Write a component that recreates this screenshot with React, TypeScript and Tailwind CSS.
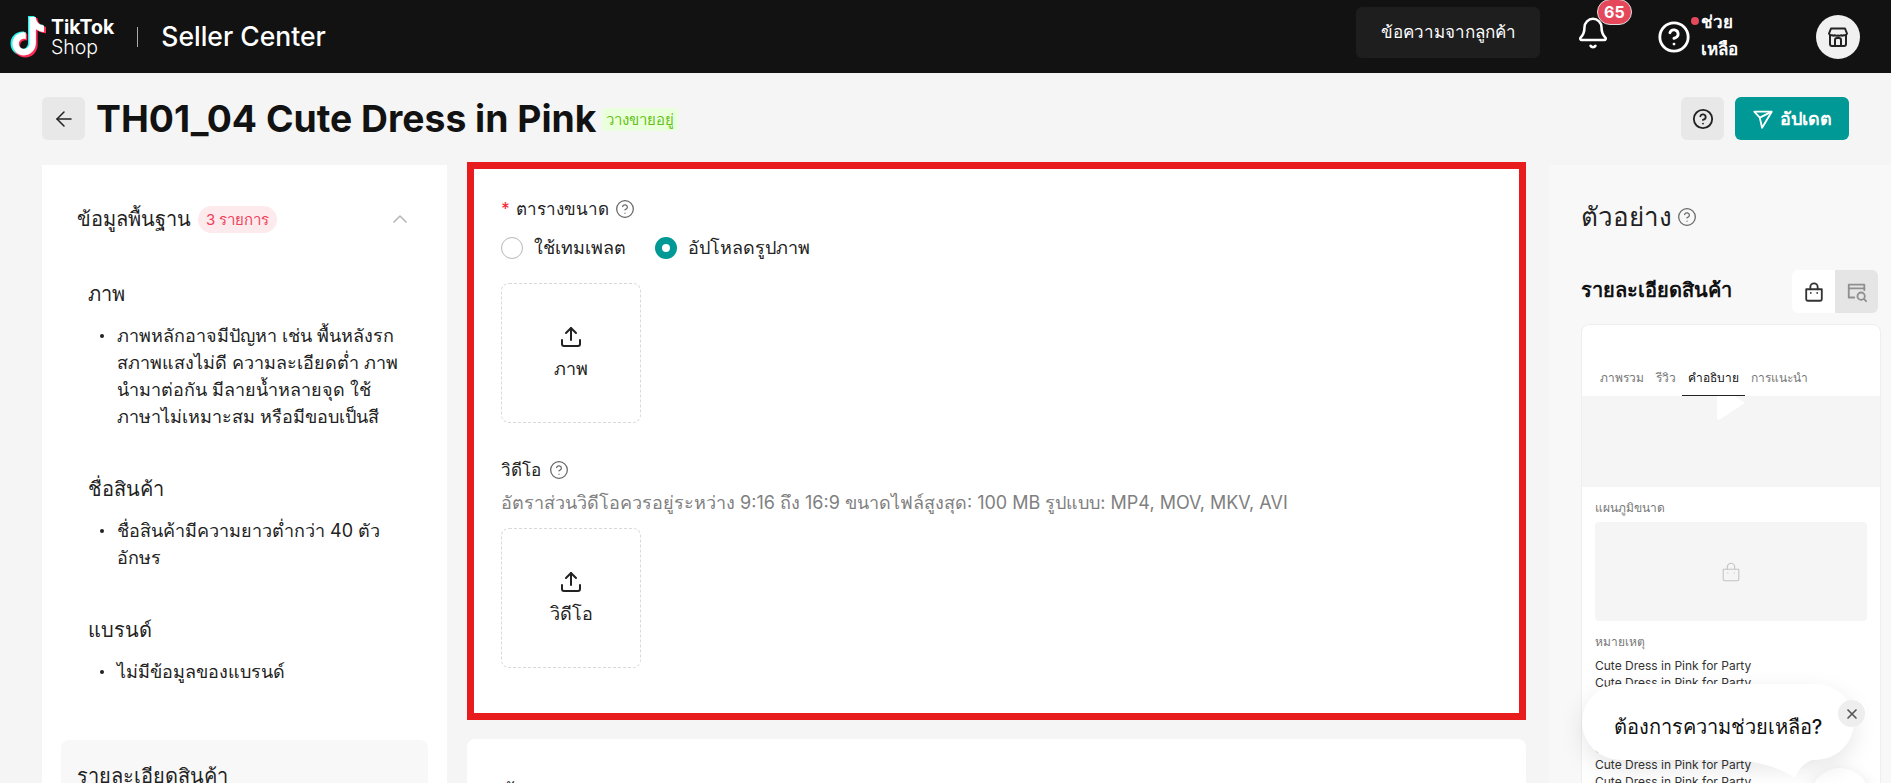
import { ArrowLeft, Bell, ChevronUp, CircleHelp, Upload, X } from "lucide-react";

const issueGroups = [
  {
    title: "ภาพ",
    items: ["ภาพหลักอาจมีปัญหา เช่น พื้นหลังรก สภาพแสงไม่ดี ความละเอียดต่ำ ภาพนำมาต่อกัน มีลายน้ำหลายจุด ใช้ภาษาไม่เหมาะสม หรือมีขอบเป็นสี"],
  },
  { title: "ชื่อสินค้า", items: ["ชื่อสินค้ามีความยาวต่ำกว่า 40 ตัวอักษร"] },
  { title: "แบรนด์", items: ["ไม่มีข้อมูลของแบรนด์"] },
];

const previewTabs = ["ภาพรวม", "รีวิว", "คำอธิบาย", "การแนะนำ"];

function TikTokNote({ color, className }: { color: string; className: string }) {
  return (
    <svg viewBox="0 0 36 42" className={className} fill={color}>
      <path d="M19 1h6.400c.5 5 3.500 8.300 8.600 8.800v6.500c-3.200 0-6-1-8.400-2.700v14.200c0 7.400-5.500 12.700-12.300 12.700C6.700 40.500 1.500 35.200 1.500 28.500c0-7.300 6.100-12.800 13.700-11.900v6.900c-3.800-1-7.100 1.400-7.100 5 0 3 2.400 5.300 5.300 5.300 3.200 0 5.600-2.300 5.600-6.100V1z" />
    </svg>
  );
}

function TikTokLogo() {
  return (
    <div className="relative h-[42px] w-[36px]">
      <TikTokNote color="#25f4ee" className="absolute left-[-1px] top-[-1px] h-[42px] w-[36px]" />
      <TikTokNote color="#fe2c55" className="absolute left-[2px] top-[1px] h-[42px] w-[36px]" />
      <TikTokNote color="#ffffff" className="absolute left-[1px] top-[0px] h-[41px] w-[35px]" />
    </div>
  );
}

function StoreIcon() {
  return (
    <svg viewBox="0 0 24 24" className="h-6 w-6" fill="none" stroke="#222" strokeWidth="2" strokeLinejoin="round">
      <path d="M4 10v9a2 2 0 0 0 2 2h12a2 2 0 0 0 2-2v-9" />
      <path d="M5 3.500h14l2 5a2.500 2.500 0 0 1-3 1.700 3 3 0 0 1-3 0 3 3 0 0 1-3 .3 3 3 0 0 1-3-.3 3 3 0 0 1-3 0 2.500 2.500 0 0 1-3-1.700l2-5z" />
      <path d="M9 21v-6a2 2 0 0 1 2-2h2a2 2 0 0 1 2 2v6" />
    </svg>
  );
}

function SendOutline() {
  return (
    <svg viewBox="0 0 24 24" className="h-[22px] w-[22px]" fill="none" stroke="#fff" strokeWidth="2" strokeLinejoin="round">
      <path d="M2.500 4h19L11 21.500 8.500 10.500 2.500 4z" />
      <path d="M8.500 10.500 21.500 4" />
    </svg>
  );
}

function BagIcon({ className, stroke, strokeWidth = 2 }: { className: string; stroke: string; strokeWidth?: number }) {
  return (
    <svg viewBox="0 0 24 24" className={className} fill="none" stroke={stroke} strokeWidth={strokeWidth} strokeLinecap="round" strokeLinejoin="round">
      <path d="M3.500 9h17v11a1.500 1.500 0 0 1-1.500 1.500H5A1.500 1.500 0 0 1 3.500 20V9z" />
      <path d="M8 9V6.500a4 4 0 0 1 8 0V9" />
      <path d="M8.500 13h.01M15.500 13h.01" />
    </svg>
  );
}

function SearchDocIcon() {
  return (
    <svg viewBox="0 0 24 24" className="h-[22px] w-[22px]" fill="none" stroke="#8f8f8f" strokeWidth="2" strokeLinecap="round" strokeLinejoin="round">
      <path d="M20 10V4H3v14h6" />
      <path d="M3 8h17" />
      <circle cx="16.500" cy="16.500" r="4" />
      <path d="M19.500 19.500 22 22" />
    </svg>
  );
}

function UploadBox({ label }: { label: string }) {
  return (
    <div className="flex h-[140px] w-[140px] flex-col items-center justify-center gap-[8px] rounded-lg border border-dashed border-[#d9d9d9]">
      <Upload className="h-[24px] w-[24px] text-[#222]" strokeWidth={2} />
      <span className="text-[18px] font-medium leading-6 text-[#222]">{label}</span>
    </div>
  );
}

function Radio({ checked, label }: { checked?: boolean; label: string }) {
  return (
    <label className="flex items-center gap-[11px]">
      {checked ? (
        <span className="h-[22px] w-[22px] rounded-full border-[7px] border-[#009995] bg-white" />
      ) : (
        <span className="h-[22px] w-[22px] rounded-full border border-[#b8b8b8] bg-white" />
      )}
      <span className="text-[18px] leading-6 text-[#222]">{label}</span>
    </label>
  );
}

function LeftPanel() {
  return (
    <aside className="mt-[3px] h-[700px] w-[405px] shrink-0 overflow-hidden bg-white px-[19px] pt-[40px]">
      <div className="flex items-center px-4">
        <span className="text-[20px] font-medium leading-[28px] text-[#222]">ข้อมูลพื้นฐาน</span>
        <span className="ml-[7px] rounded-full bg-[#fdeaed] px-2 text-[15px] leading-[27px] text-[#f0405a]">3 รายการ</span>
        <ChevronUp className="ml-auto h-6 w-6 text-[#b5b5b5]" strokeWidth={1.5} />
      </div>
      <div className="mt-[47px] flex flex-col gap-[45px] pl-[27px] pr-[24px]">
        {issueGroups.map((group) => (
          <div key={group.title}>
            <h3 className="text-[20px] font-normal leading-7 text-[#222]">{group.title}</h3>
            <ul className="mt-[14px] pl-[12px] text-[18px] leading-[27px] text-[#222]">
              {group.items.map((item) => (
                <li key={item} className="flex gap-[13px]">
                  <span className="mt-[12px] h-1 w-1 shrink-0 rounded-full bg-[#222]" />
                  <span>{item}</span>
                </li>
              ))}
            </ul>
          </div>
        ))}
      </div>
      <div className="mt-[55px] h-[100px] rounded-lg bg-[#f8f8f8] px-4 pt-[22px]">
        <span className="text-[20px] font-medium leading-7 text-[#222]">รายละเอียดสินค้า</span>
      </div>
    </aside>
  );
}

function CenterColumn() {
  return (
    <main className="flex w-[1059px] shrink-0 flex-col gap-[19px]">
      <section className="h-[558px] border-[7px] border-[#e81c1c] bg-white pl-[27px] pt-[28px]">
        <div className="flex items-center text-[17px] font-medium leading-6 text-[#222]">
          <span className="mr-[6px] text-[#f5303e]">*</span>
          ตารางขนาด
          <CircleHelp className="ml-[6px] h-[20px] w-[20px] text-[#666]" strokeWidth={1.5} />
        </div>
        <div className="mt-[15px] flex gap-[29px]">
          <Radio label="ใช้เทมเพลต" />
          <Radio checked label="อัปโหลดรูปภาพ" />
        </div>
        <div className="mt-[23px]">
          <UploadBox label="ภาพ" />
        </div>
        <div className="mt-[35px] flex items-center gap-[8px] text-[17px] font-medium leading-6 text-[#222]">
          วิดีโอ
          <CircleHelp className="h-[20px] w-[20px] text-[#666]" strokeWidth={1.5} />
        </div>
        <p className="mt-[9px] text-[18px] leading-6 text-[#808080]">
          อัตราส่วนวิดีโอควรอยู่ระหว่าง 9:16 ถึง 16:9 ขนาดไฟล์สูงสุด: 100 MB รูปแบบ: MP4, MOV, MKV, AVI
        </p>
        <div className="mt-[13px]">
          <UploadBox label="วิดีโอ" />
        </div>
      </section>
      <section className="h-[100px] rounded-lg bg-white pl-[34px] pt-[38px]">
        <span className="text-[20px] font-medium leading-7 text-[#222]">ข้อมูลการขาย</span>
      </section>
    </main>
  );
}

function RightPanel() {
  return (
    <aside className="mt-[3px] h-[700px] flex-1 overflow-hidden bg-[#f8f8f8] pl-[32px] pr-[10px] pt-[34px]">
      <div className="flex items-center gap-[5px]">
        <span className="text-[26px] font-medium leading-9 text-[#222]">ตัวอย่าง</span>
        <CircleHelp className="h-[20px] w-[20px] text-[#666]" strokeWidth={1.5} />
      </div>
      <div className="mt-[35px] flex items-center justify-between pr-[3px]">
        <span className="mb-[4px] text-[20px] font-semibold leading-7 text-[#111]">รายละเอียดสินค้า</span>
        <div className="flex overflow-hidden rounded-md">
          <span className="flex h-[43px] w-[43px] items-center justify-center bg-white">
            <BagIcon className="h-[22px] w-[22px]" stroke="#333" />
          </span>
          <span className="flex h-[43px] w-[43px] items-center justify-center bg-[#e5e5e5]">
            <SearchDocIcon />
          </span>
        </div>
      </div>
      <div className="mt-[11px] overflow-hidden rounded-t-lg border border-[#eeeeee] bg-white">
        <div className="flex h-[71px] items-end px-[12px]">
          {previewTabs.map((tab, i) => (
            <span
              key={tab}
              className={`h-[33px] px-[6px] pt-[5px] text-[12px] leading-5 ${i === 2 ? "border-b border-[#222] text-[#111]" : "text-[#777]"}`}
            >
              {tab}
            </span>
          ))}
        </div>
        <div className="flex h-[91px] justify-center bg-[#f5f5f5]">
          <svg viewBox="0 0 28 24" className="h-[24px] w-[28px]" fill="#fff">
            <path d="M0 0h18l10 7L2 24l-2-1z" />
          </svg>
        </div>
        <div className="px-[13px] pt-[12px]">
          <p className="text-[12px] leading-[18px] text-[#777]">แผนภูมิขนาด</p>
          <div className="mt-[5px] flex h-[99px] items-center justify-center rounded-sm bg-[#f5f5f5]">
            <BagIcon className="h-[22px] w-[22px]" stroke="#c4c4c4" strokeWidth={1.2} />
          </div>
          <p className="mt-[12px] text-[12px] leading-[18px] text-[#777]">หมายเหตุ</p>
          <div className="mt-[7px] text-[12px] leading-[16.5px] text-[#333]">
            {Array.from({ length: 8 }).map((_, i) => (
              <p key={i}>Cute Dress in Pink for Party</p>
            ))}
          </div>
        </div>
      </div>
    </aside>
  );
}

function HelpBubble() {
  return (
    <>
      <div className="absolute right-[21px] top-[768px] h-[60px] w-[60px] rounded-full bg-white shadow-[0_4px_16px_rgba(0,0,0,0.12)]" />
      <div className="absolute left-[1582px] top-[684px] flex h-[76px] w-[272px] items-center justify-center rounded-[38px] bg-white pt-[10px] text-[20px] font-medium text-[#111] shadow-[0_8px_24px_rgba(0,0,0,0.1)]">
        ต้องการความช่วยเหลือ?
      </div>
      <svg viewBox="0 0 95 24" className="absolute left-[1735px] top-[757px] h-[24px] w-[95px]" fill="#fff">
        <path d="M0 0h95C75 0 65 8 60 21 45 10 20 4 0 3z" />
      </svg>
      <span className="absolute left-[1838px] top-[700px] flex h-[27px] w-[27px] items-center justify-center rounded-full bg-[#eeeeee]">
        <X className="h-4 w-4 text-[#555]" strokeWidth={2.5} />
      </span>
    </>
  );
}

export default function App() {
  return (
    <div className="relative h-screen overflow-hidden bg-[#f5f5f5] font-['Inter','Noto_Sans',sans-serif]">
      <header className="flex h-[73px] items-center bg-[#121212] pl-[10px] pr-[31px] text-white">
        <TikTokLogo />
        <div className="ml-[5px] flex flex-col text-[19.5px] leading-[20px]">
          <span className="font-bold">TikTok</span>
          <span className="font-light">Shop</span>
        </div>
        <span className="ml-[23px] h-[20px] w-px bg-[#aaa]" />
        <span className="ml-[23px] text-[26.5px] font-medium">Seller Center</span>
        <div className="mb-[8px] ml-auto flex h-[51px] w-[184px] items-center justify-center rounded-md bg-[#1e1e1e] text-[17px] font-medium">
          ข้อความจากลูกค้า
        </div>
        <div className="relative ml-[36px] mb-[4px] h-[40px] w-[34px]">
          <Bell className="h-[36px] w-[34px]" strokeWidth={1.8} />
          <span className="absolute left-[21px] top-[-16px] rounded-full border border-[#ddd] bg-[#e5485a] px-[6px] text-[16px] font-bold leading-[24px]">65</span>
        </div>
        <div className="relative ml-[47px]">
          <CircleHelp className="h-[34px] w-[34px]" strokeWidth={2} />
          <span className="absolute right-[-8px] top-[-3px] h-2 w-2 rounded-full bg-[#e5485a]" />
        </div>
        <div className="mb-[2px] ml-[10px] w-[52px] text-[17px] font-semibold leading-[27px]">ช่วยเหลือ</div>
        <div className="ml-[63px] flex h-[44px] w-[44px] items-center justify-center rounded-full bg-[#f0f0f0]">
          <StoreIcon />
        </div>
      </header>

      <div className="flex h-[89px] items-center pl-[42px] pr-[42px] pt-[2px]">
        <button className="flex h-[43px] w-[43px] items-center justify-center rounded-md bg-[#e8e8e8]">
          <ArrowLeft className="h-6 w-6 text-[#222]" strokeWidth={1.5} />
        </button>
        <h1 className="ml-[11px] text-[37.3px] font-bold leading-[48px] text-[#121212]">TH01_04 Cute Dress in Pink</h1>
        <span className="ml-[6px] mt-[2px] rounded-sm bg-[#eaffdb] px-[4px] text-[15px] leading-[23px] text-[#66c21a]">วางขายอยู่</span>
        <button className="ml-auto flex h-[43px] w-[43px] items-center justify-center rounded-md bg-[#e8e8e8]">
          <CircleHelp className="h-[22px] w-[22px] text-[#222]" strokeWidth={2} />
        </button>
        <button className="ml-[11px] flex h-[43px] w-[114px] items-center justify-center gap-[6px] rounded-md bg-[#009995] text-[18px] font-semibold text-white">
          <SendOutline />
          อัปเดต
        </button>
      </div>

      <div className="flex items-start pl-[42px]">
        <LeftPanel />
        <div className="ml-[20px]">
          <CenterColumn />
        </div>
        <div className="ml-[23px] flex-1">
          <RightPanel />
        </div>
      </div>

      <HelpBubble />
    </div>
  );
}
